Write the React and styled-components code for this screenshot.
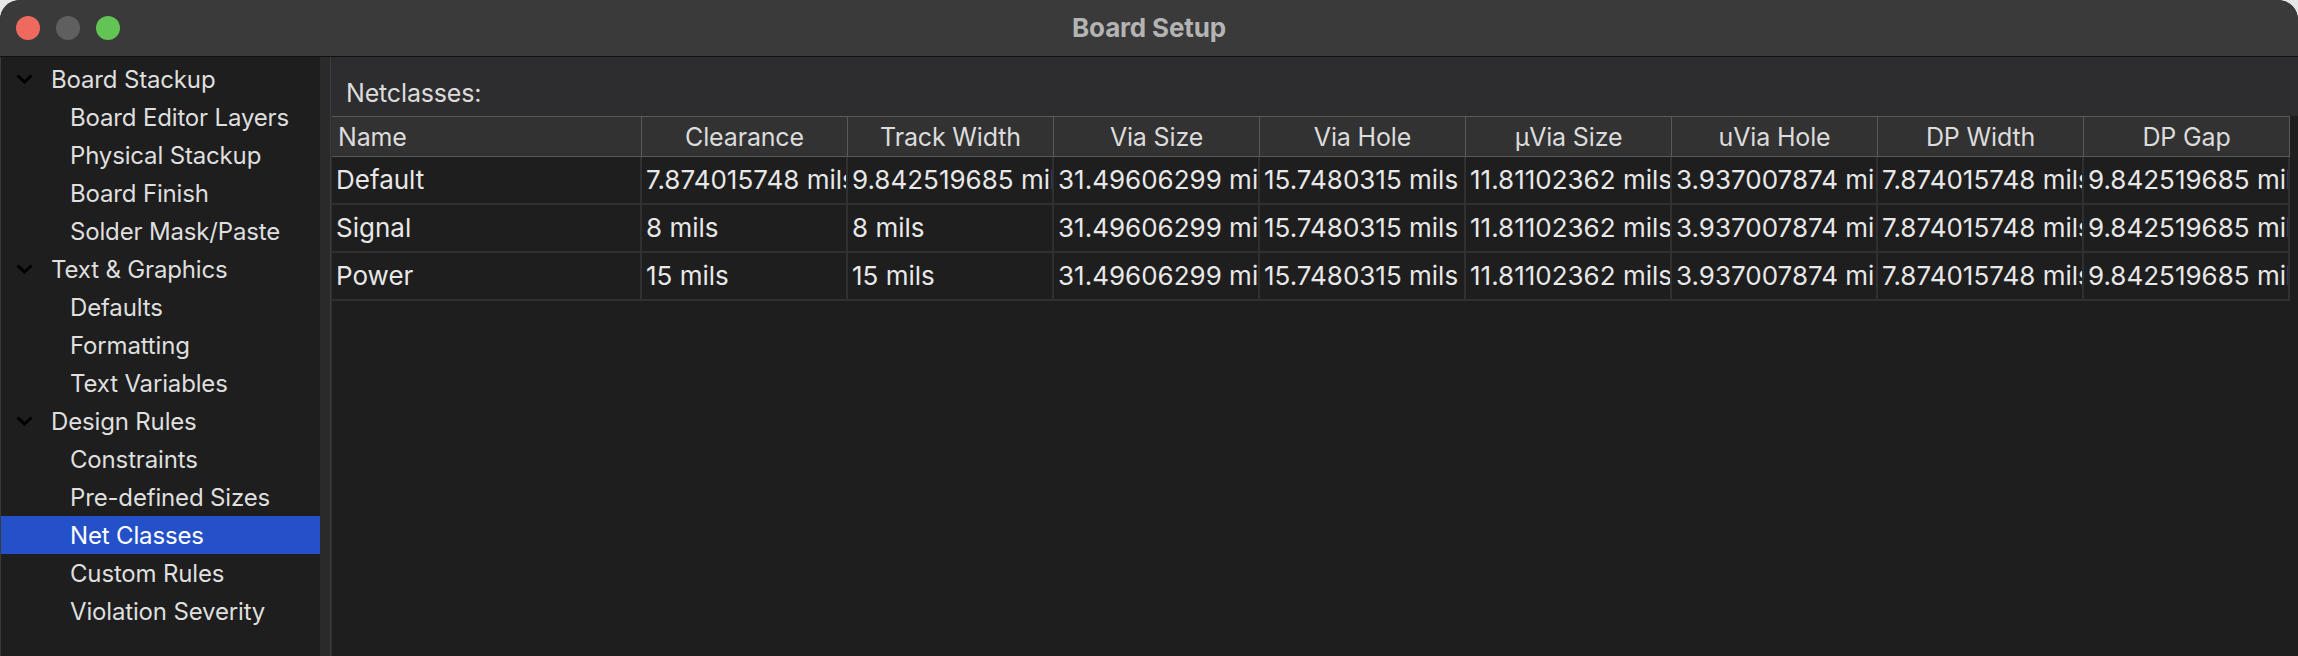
import React from "react";
import styled, { createGlobalStyle } from "styled-components";

const GlobalStyle = createGlobalStyle`
  html, body {
    margin: 0;
    padding: 0;
    background: #e6e6e6;
  }
  * {
    box-sizing: border-box;
  }
`;

const Window = styled.div`
  width: 2298px;
  height: 656px;
  display: flex;
  flex-direction: column;
  border-radius: 20px 20px 0 0;
  overflow: hidden;
  background: #1e1e1e;
  font-family: "Inter", "Noto Sans", sans-serif;
  letter-spacing: -0.01em;
`;

const TitleBar = styled.div`
  height: 57px;
  flex-shrink: 0;
  display: grid;
  grid-template-columns: 1fr auto 1fr;
  align-items: center;
  background: #3a3a3a;
  border-bottom: 1px solid #111;
  padding: 0 16px;
`;

const Lights = styled.div`
  display: flex;
  gap: 16px;
`;

const Light = styled.span`
  width: 24px;
  height: 24px;
  border-radius: 50%;
  background: ${(p) => p.color};
`;

const Title = styled.div`
  font-size: 26px;
  font-weight: 700;
  color: #b4b4b4;
  padding-bottom: 2px;
`;

const Main = styled.div`
  flex: 1;
  display: flex;
  min-height: 0;
`;

const Sidebar = styled.div`
  width: 320px;
  flex-shrink: 0;
  background: #1e1e1e;
  padding-top: 3px;
  border-left: 1px solid #3a3a3a;
`;

const TreeRow = styled.div`
  height: 38px;
  display: flex;
  align-items: center;
  font-size: 24px;
  color: ${(p) => (p.selected ? "#ffffff" : "#dfdfdf")};
  background: ${(p) => (p.selected ? "#2450c8" : "transparent")};
  padding-left: ${(p) => (p.child ? "69px" : "15px")};
  white-space: nowrap;
`;

const Chevron = styled.svg`
  width: 17px;
  height: 10px;
  margin-right: 18px;
  flex-shrink: 0;
`;

const Splitter = styled.div`
  width: 11px;
  flex-shrink: 0;
  background: #2b2a2b;
  border-right: 1px solid #3c3c3c;
`;

const Content = styled.div`
  flex: 1;
  display: flex;
  flex-direction: column;
  background: #2d2c2e;
  min-width: 0;
`;

const Label = styled.div`
  font-size: 25px;
  line-height: 31px;
  color: #dcdcdc;
  padding: 21px 0 7px 15px;
`;

const GridArea = styled.div`
  flex: 1;
  background: #1e1e1e;
  margin-left: 1px;
`;

const Table = styled.div`
  display: grid;
  grid-template-columns: 310px repeat(8, 206px);
  width: max-content;
`;

const HeadCell = styled.div`
  height: 41px;
  display: flex;
  align-items: center;
  justify-content: ${(p) => (p.left ? "flex-start" : "center")};
  padding: 0 6px;
  background: #323232;
  border-top: 1px solid #5a5a5a;
  border-bottom: 1px solid #5a5a5a;
  border-right: 1px solid #5a5a5a;
  font-size: 25px;
  color: #dcdcdc;
  white-space: nowrap;
  overflow: hidden;
`;

const Cell = styled.div`
  height: 48px;
  display: flex;
  align-items: center;
  padding: 0 4px 2px 4px;
  background: #1e1e1e;
  border-bottom: 2px solid #303030;
  border-right: 2px solid #303030;
  font-size: 26px;
  letter-spacing: 0;
  color: #e8e8e8;
  white-space: nowrap;
  overflow: hidden;
`;

const tree = [
  { label: "Board Stackup", top: true },
  { label: "Board Editor Layers" },
  { label: "Physical Stackup" },
  { label: "Board Finish" },
  { label: "Solder Mask/Paste" },
  { label: "Text & Graphics", top: true },
  { label: "Defaults" },
  { label: "Formatting" },
  { label: "Text Variables" },
  { label: "Design Rules", top: true },
  { label: "Constraints" },
  { label: "Pre-defined Sizes" },
  { label: "Net Classes", selected: true },
  { label: "Custom Rules" },
  { label: "Violation Severity" },
];

const columns = [
  "Name",
  "Clearance",
  "Track Width",
  "Via Size",
  "Via Hole",
  "µVia Size",
  "uVia Hole",
  "DP Width",
  "DP Gap",
];

const common = [
  "31.49606299 mils",
  "15.7480315 mils",
  "11.81102362 mils",
  "3.937007874 mils",
  "7.874015748 mils",
  "9.842519685 mils",
];

const netclasses = [
  ["Default", "7.874015748 mils", "9.842519685 mils", ...common],
  ["Signal", "8 mils", "8 mils", ...common],
  ["Power", "15 mils", "15 mils", ...common],
];

const App = () => {
  return (
    <>
      <GlobalStyle />
      <Window>
        <TitleBar>
          <Lights>
            <Light color="#ee6a5f" />
            <Light color="#5f5f5f" />
            <Light color="#61c454" />
          </Lights>
          <Title>Board Setup</Title>
          <div />
        </TitleBar>
        <Main>
          <Sidebar>
            {tree.map((item) => (
              <TreeRow key={item.label} child={!item.top} selected={item.selected}>
                {item.top && (
                  <Chevron viewBox="0 0 17 10">
                    <polyline
                      points="1.5,1.5 8.5,8 15.5,1.5"
                      fill="none"
                      stroke="#000"
                      strokeWidth="3"
                    />
                  </Chevron>
                )}
                {item.label}
              </TreeRow>
            ))}
          </Sidebar>
          <Splitter />
          <Content>
            <Label>Netclasses:</Label>
            <GridArea>
              <Table>
                {columns.map((col, i) => (
                  <HeadCell key={col} left={i === 0}>
                    {col}
                  </HeadCell>
                ))}
                {netclasses.map((row) =>
                  row.map((value, i) => <Cell key={row[0] + i}>{value}</Cell>)
                )}
              </Table>
            </GridArea>
          </Content>
        </Main>
      </Window>
    </>
  );
};

export default App;
